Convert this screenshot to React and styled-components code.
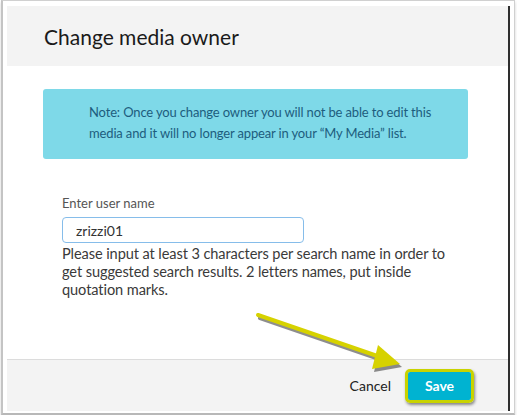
import React from "react";
import styled, { createGlobalStyle } from "styled-components";

const GlobalStyle = createGlobalStyle`
  html, body {
    margin: 0;
    padding: 0;
    background: #ffffff;
    font-family: Lato, "Open Sans", sans-serif;
  }
`;

function App() {
  return (
    <>
      <GlobalStyle />
      <Frame>
        <Dialog>
          <Header>
            <Title>Change media owner</Title>
          </Header>
          <Body>
            <Note>
              Note: Once you change owner you will not be able to edit this
              media and it will no longer appear in your “My Media” list.
            </Note>
            <Field>
              <Label>Enter user name</Label>
              <Input defaultValue="zrizzi01" />
              <Help>
                Please input at least 3 characters per search name in order to
                get suggested search results. 2 letters names, put inside
                quotation marks.
              </Help>
            </Field>
          </Body>
          <Footer>
            <CancelButton>Cancel</CancelButton>
            <Highlight>
              <SaveButton>Save</SaveButton>
            </Highlight>
          </Footer>
          <Arrow viewBox="0 0 160 70" width="160" height="70">
            <g transform="translate(2,3)" opacity="0.55">
              <line x1="4" y1="6" x2="132" y2="50" stroke="#333" strokeWidth="4" strokeLinecap="round" />
              <polygon points="146,55 124,36 118,60" fill="#333" />
            </g>
            <line x1="4" y1="6" x2="132" y2="50" stroke="#d6d200" strokeWidth="4" strokeLinecap="round" />
            <polygon points="146,55 124,36 118,60" fill="#d6d200" />
          </Arrow>
        </Dialog>
      </Frame>
    </>
  );
}

export default App;

const Frame = styled.div`
  margin-left: 1px;
  width: 514px;
  height: 415px;
  box-sizing: border-box;
  border: 1px solid #d0d0d0;
  border-left: 2px solid #c4c4c4;
  border-bottom: 2px solid #b8b8b8;
  box-shadow: 0 2px 3px rgba(0, 0, 0, 0.18);
  padding: 5px 4px 2px 4px;
`;

const Dialog = styled.div`
  position: relative;
  width: 503px;
  height: 405px;
  box-sizing: border-box;
  border-right: 2px solid #2e2e2e;
  display: flex;
  flex-direction: column;
`;

const Header = styled.div`
  height: 60px;
  background: #f3f3f3;
  display: flex;
  align-items: center;
  padding-left: 37px;
`;

const Title = styled.h1`
  margin: 0;
  font-size: 21px;
  font-weight: 400;
  color: #1a1a1a;
`;

const Body = styled.div`
  flex: 1;
  background: #fff;
  padding: 23px 40px 0 36px;
  border-bottom: 1px solid #dcdcdc;
`;

const Note = styled.div`
  background: #7ed9e8;
  border-radius: 3px;
  height: 70px;
  box-sizing: border-box;
  padding: 13px 8px 0 46px;
  font-size: 13px;
  letter-spacing: -0.15px;
  line-height: 21px;
  color: #1d5d7e;
`;

const Field = styled.div`
  padding: 36px 0 0 19px;
`;

const Label = styled.div`
  font-size: 13px;
  color: #555;
  line-height: 16px;
  margin-bottom: 6px;
`;

const Input = styled.input`
  display: block;
  width: 242px;
  height: 26px;
  box-sizing: border-box;
  border: 1px solid #86bdea;
  border-radius: 4px;
  padding: 0 13px;
  font-family: Lato, sans-serif;
  font-size: 14px;
  color: #333;
  outline: none;
`;

const Help = styled.p`
  margin: 2px 0 0;
  width: 392px;
  font-size: 14.6px;
  letter-spacing: -0.1px;
  line-height: 18px;
  color: #3a3a3a;
`;

const Footer = styled.div`
  height: 51px;
  background: #f3f3f3;
  display: flex;
  align-items: center;
  justify-content: flex-end;
  padding-right: 34px;
  gap: 14px;
`;

const CancelButton = styled.button`
  border: none;
  background: transparent;
  padding: 0;
  font-family: Lato, sans-serif;
  font-size: 14px;
  color: #222;
`;

const Highlight = styled.div`
  border: 3px solid #c9d300;
  border-radius: 5px;
  padding: 0;
  box-shadow: 1px 2px 3px rgba(0, 0, 0, 0.45);
  display: flex;
`;

const SaveButton = styled.button`
  width: 63px;
  height: 28px;
  border: none;
  border-radius: 2px;
  background: #00b3d1;
  color: #fff;
  font-family: Lato, sans-serif;
  font-weight: 700;
  font-size: 14px;
`;

const Arrow = styled.svg`
  position: absolute;
  left: 247px;
  top: 303px;
  overflow: visible;
`;
